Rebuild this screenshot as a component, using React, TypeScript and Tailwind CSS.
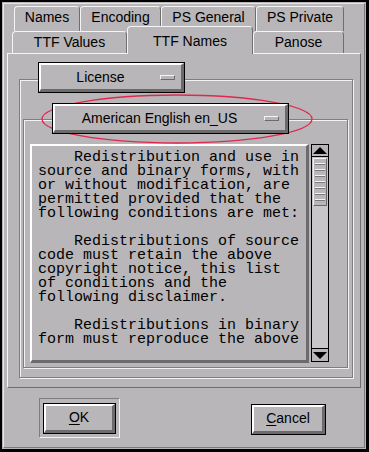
import React from "react"

const licenseText = `    Redistribution and use in
source and binary forms, with
or without modification, are
permitted provided that the
following conditions are met:

    Redistributions of source
code must retain the above
copyright notice, this list
of conditions and the
following disclaimer.

    Redistributions in binary
form must reproduce the above`

function Tab({ label, w, h, selected = false, pb = "pb-[3px]" }: { label: string; w: string; h: string; selected?: boolean; pb?: string }) {
  return (
    <div
      className={`${w} ${h} ${pb} ${selected ? "relative z-10 -mb-[1px] border-b-0" : ""} flex items-center justify-center rounded-t-[4px] border-l border-t border-r border-l-[#f4f4f4] border-t-[#f4f4f4] border-r-[#6e6e6e] bg-[#b8b6b8] text-[14px] text-black`}
    >
      {label}
    </div>
  )
}

function Indicator() {
  return <div className="h-[5px] w-[15px] border border-t-[#f4f4f4] border-l-[#f4f4f4] border-r-[#6b6b6b] border-b-[#6b6b6b]" />
}

function OptionButton({ label, w, indicatorMr }: { label: string; w: string; indicatorMr: string }) {
  return (
    <div className={`relative z-10 ${w} h-[31px] border border-black`}>
      <div className="flex h-full items-center border-t-2 border-l-2 border-b-[3px] border-r-[3px] border-t-white border-l-white border-b-[#6b6b6b] border-r-[#6b6b6b] bg-[#b8b6b8]">
        <span className="flex-1 text-center text-[14px] leading-none">{label}</span>
        <div className={indicatorMr}>
          <Indicator />
        </div>
      </div>
    </div>
  )
}

function PushButton({ children, w }: { children: React.ReactNode; w: string }) {
  return (
    <div className={`${w} h-[31px] border border-black`}>
      <div className="flex h-full items-center justify-center border-t-2 border-l-2 border-b-[3px] border-r-[3px] border-t-white border-l-white border-b-[#6b6b6b] border-r-[#6b6b6b] bg-[#b8b6b8] text-[14px]">
        {children}
      </div>
    </div>
  )
}

function ScrollBar() {
  return (
    <div className="flex h-[218px] w-[18px] flex-col border border-black bg-[#c9c6c9]">
      <div className="flex h-[12px] items-center justify-center border-b border-black bg-[#b8b6b8]">
        <div className="h-0 w-0 border-l-[7px] border-r-[7px] border-b-[7px] border-l-transparent border-r-transparent border-b-black" />
      </div>
      <div className="mx-[1px] mt-[1px] flex h-[48px] flex-col items-center justify-center gap-[4px] border border-t-[#f0f0f0] border-l-[#f0f0f0] border-r-[#6b6b6b] border-b-[#6b6b6b] bg-[#b8b6b8]">
        {[0, 1, 2, 3, 4, 5, 6].map((i) => (
          <div key={i} className="h-[2px] w-[10px] border-t border-b border-t-[#f4f4f4] border-b-[#7a7a7a]" />
        ))}
      </div>
      <div className="flex-1" />
      <div className="flex h-[13px] items-center justify-center border-t border-black bg-[#b8b6b8]">
        <div className="h-0 w-0 border-l-[7px] border-r-[7px] border-t-[7px] border-l-transparent border-r-transparent border-t-black" />
      </div>
    </div>
  )
}

export default function App() {
  return (
    <div className="relative h-[452px] w-[369px] border-t-2 border-l-2 border-r-[3px] border-b-[3px] border-black bg-[#b8b6b8] font-['Liberation_Sans',Arial,sans-serif] text-black">
      <div className="m-[1px] flex h-[calc(100%-2px)] flex-col border border-t-[#e6e6e6] border-l-[#e6e6e6] border-r-[#7a7a7a] border-b-[#7a7a7a]">
        {/* tabs row 1 */}
        <div className="ml-[10px] mt-[2px] flex h-[25px]">
          <Tab label="Names" w="w-[66px]" h="h-[25px]" />
          <Tab label="Encoding" w="w-[81px]" h="h-[25px]" />
          <Tab label="PS General" w="w-[95px]" h="h-[25px]" />
          <Tab label="PS Private" w="w-[88px]" h="h-[25px]" />
        </div>
        {/* tabs row 2 */}
        <div className="relative z-10 -mt-[5px] ml-[8px] flex h-[27px] items-end">
          <Tab label="TTF Values" w="w-[115px]" h="h-[22px]" pb="pb-[1px]" />
          <Tab label="TTF Names" w="w-[126px]" h="h-[28px]" selected pb="pt-[1px]" />
          <Tab label="Panose" w="w-[91px]" h="h-[22px]" pb="pb-[1px]" />
        </div>
        {/* panel */}
        <div className="ml-[3px] flex h-[335px] w-[354px] flex-col border border-t-[#f4f4f4] border-l-[#f4f4f4] border-r-[#6e6e6e] border-b-[#6e6e6e]">
          <div className="ml-[30px] mt-[8px]">
            <OptionButton label="License" w="w-[147px]" indicatorMr="mr-[6px]" />
          </div>
          <div className="-mt-[14px] ml-[11px] h-[299px] w-[334px] border border-[#7e7e7e] shadow-[inset_1px_1px_0_#f2f2f2,1px_1px_0_#f2f2f2]">
            <div className="ml-[32px] mt-[23px]">
              <OptionButton label="American English en_US" w="w-[237px]" indicatorMr="mr-[6px]" />
            </div>
            <div className="-mt-[15px] ml-[3px] h-[249px] w-[325px] border border-[#7e7e7e] shadow-[inset_1px_1px_0_#f2f2f2,1px_1px_0_#f2f2f2]">
              <div className="ml-[6px] mt-[24px] flex gap-[2px]">
                <div className="h-[219px] w-[279px] overflow-hidden border-t-2 border-l-2 border-b-[3px] border-r-[3px] border-t-white border-l-white border-b-[#6b6b6b] border-r-[#6b6b6b] bg-[#b8b6b8] pl-[6px] pt-[5px]">
                  <pre className="whitespace-pre font-['Liberation_Mono','Courier_New',monospace] text-[15px] leading-[14px] text-black">{licenseText}</pre>
                </div>
                <ScrollBar />
              </div>
            </div>
          </div>
        </div>
        {/* buttons */}
        <div className="mt-[10px] flex items-center justify-between pl-[35px] pr-[38px]">
          <div className="flex h-[40px] w-[81px] items-center justify-center border border-t-[#7e7e7e] border-l-[#7e7e7e] border-r-[#f2f2f2] border-b-[#f2f2f2]">
            <PushButton w="w-[73px]">
              <span>
                <span className="underline underline-offset-2">O</span>K
              </span>
            </PushButton>
          </div>
          <div className="mt-[2px]">
            <PushButton w="w-[75px]">
              <span>
                <span className="underline underline-offset-2">C</span>ancel
              </span>
            </PushButton>
          </div>
        </div>
      </div>
      {/* annotation ellipse */}
      <svg className="pointer-events-none absolute left-[39px] top-[92px]" width="272" height="50" viewBox="0 0 272 50">
        <ellipse cx="136" cy="25" rx="135" ry="24" fill="none" stroke="#e0284f" strokeWidth="1.3" />
      </svg>
    </div>
  )
}
